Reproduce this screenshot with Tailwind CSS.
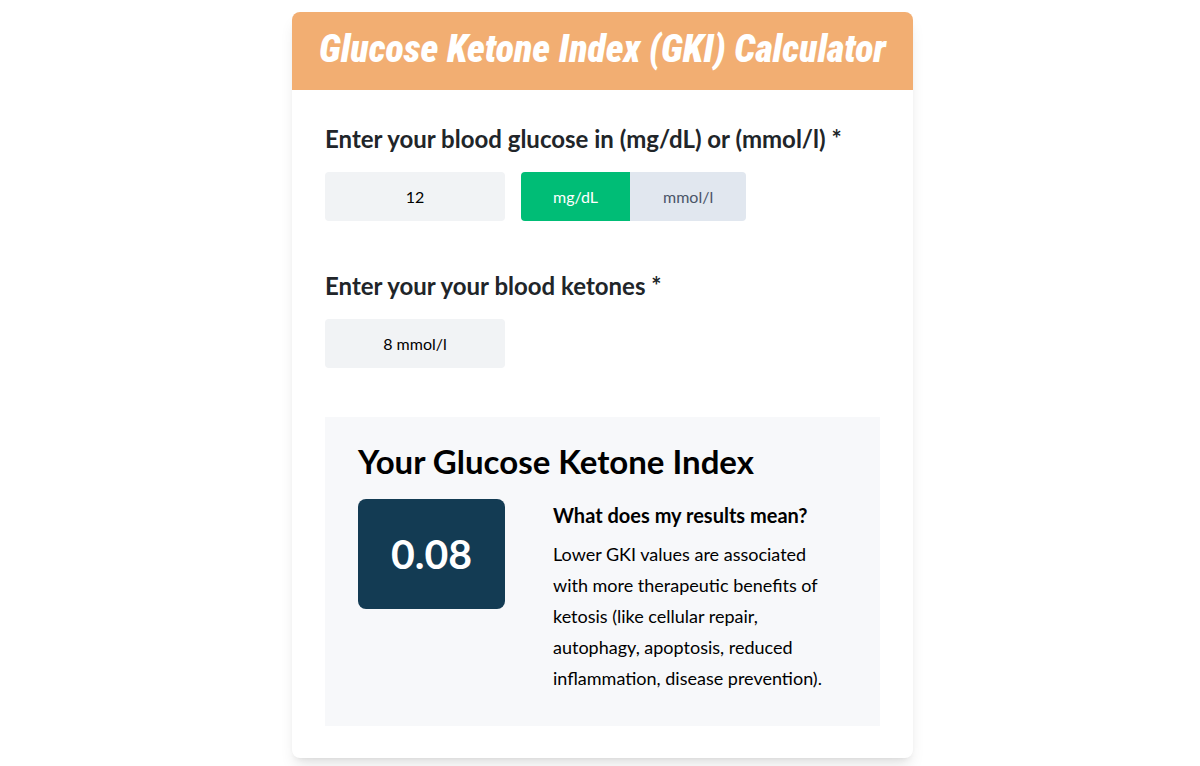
<!DOCTYPE html>
<html lang="en">
<head>
    <meta charset="UTF-8">
    <meta name="viewport" content="width=device-width, initial-scale=1.0">
    <title>Glucose Ketone Index (GKI) Calculator</title>
    <script src="https://cdn.jsdelivr.net/npm/@tailwindcss/browser@4"></script>
</head>
<body class="bg-white pt-3 pb-2 pl-[5px] font-['Lato',sans-serif] text-black">
    <main class="mx-auto w-full max-w-[621px] overflow-hidden rounded-lg bg-white shadow-lg">
        <!-- Header -->
        <header class="bg-[#f2ae72] px-4 pt-3.5 pb-4.5 text-center">
            <h1 class="font-[Impact,'Roboto_Condensed',Roboto,sans-serif] text-[38px] leading-[46px] font-black italic text-white">Glucose Ketone Index (GKI) Calculator</h1>
        </header>

        <form class="px-[33px] py-8">
            <!-- Glucose -->
            <label for="glucose" class="block text-2xl leading-[34px] font-bold text-[#212529]">Enter your blood glucose in (mg/dL) or (mmol/l) *</label>
            <div class="mt-4 flex gap-4">
                <input id="glucose" type="text" value="12" class="h-[49px] w-[180px] rounded bg-[#f1f3f5] text-center text-base">
                <div class="flex overflow-hidden rounded">
                    <button type="button" class="bg-[#00bd76] px-8 text-base text-white">mg/dL</button>
                    <button type="button" class="bg-[#e1e7ef] px-[33px] text-base text-[#4a5568]">mmol/l</button>
                </div>
            </div>

            <!-- Ketones -->
            <label for="ketones" class="mt-12 block text-2xl leading-[34px] font-bold text-[#212529]">Enter your your blood ketones *</label>
            <input id="ketones" type="text" value="8 mmol/l" class="mt-4 block h-[49px] w-[180px] rounded bg-[#f1f3f5] text-center text-base">

            <!-- Result -->
            <section class="mt-[49px] bg-[#f7f8fa] px-[33px] pt-8 pb-8">
                <h2 class="text-[33px] leading-6 font-bold">Your Glucose Ketone Index</h2>
                <div class="mt-[26px] flex items-start gap-12">
                    <output for="glucose ketones" class="flex h-[110px] w-[147px] shrink-0 items-center justify-center rounded-lg bg-[#133b53] text-[41px] font-bold text-white">0.08</output>
                    <div class="pr-4">
                        <h3 class="text-xl leading-8 font-bold">What does my results mean?</h3>
                        <p class="mt-2 text-lg leading-[31px]">Lower GKI values are associated with more therapeutic benefits of ketosis (like cellular repair, autophagy, apoptosis, reduced inflammation, disease prevention).</p>
                    </div>
                </div>
            </section>
        </form>
    </main>
</body>
</html>
